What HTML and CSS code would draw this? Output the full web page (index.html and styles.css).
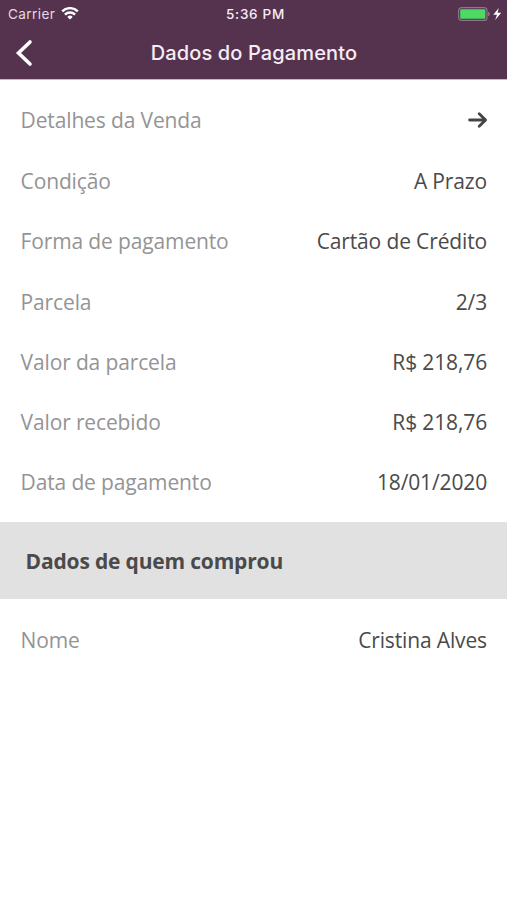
FILE: index.html
```html
<!DOCTYPE html>
<html lang="pt-BR">
<head>
<meta charset="utf-8">
<title>Dados do Pagamento</title>
<link rel="stylesheet" href="styles.css">
</head>
<body>
<header class="top">
  <div class="status">
    <div class="carrier"><span>Carrier</span>
      <svg width="18" height="14" viewBox="0 0 18 14" fill="none" stroke="#fff" stroke-width="2.4"><path d="M1.2 4.4a11 11 0 0 1 15.6 0M3.9 7.6a7.2 7.2 0 0 1 10.2 0"/><path d="M9 12.4L6.3 9.9a3.8 3.8 0 0 1 5.4 0z" fill="#fff" stroke="none"/></svg>
    </div>
    <div class="time">5:36 PM</div>
    <div class="power">
      <svg width="44" height="14" viewBox="0 0 44 14"><rect x=".6" y=".6" width="28.4" height="12.8" rx="3" fill="none" stroke="#8d758a" stroke-width="1.2"/><rect x="2.2" y="2.2" width="25.2" height="9.6" rx="1.2" fill="#4cd964"/><path d="M30 4.8q1.8.5 1.8 2.2T30 9.2z" fill="#8d758a"/><path d="M40.8 1L35.3 7.8H39L37.2 13l6-7.2h-3.7z" fill="#fff"/></svg>
    </div>
  </div>
  <nav class="nav">
    <svg class="back" width="18" height="28" viewBox="0 0 18 28" fill="none" stroke="#fff" stroke-width="3.6" stroke-linecap="round"><path d="M15 3L3.5 14 15 25"/></svg>
    <h1>Dados do Pagamento</h1>
  </nav>
</header>
<main>
  <section class="details">
    <div class="row first"><span class="label">Detalhes da Venda</span>
      <svg width="20" height="18" viewBox="0 0 20 18" fill="none" stroke="#444" stroke-width="2.8" stroke-linecap="round" stroke-linejoin="round"><path d="M1.6 9h15.8M11.2 2.8L17.6 9l-6.4 6.2"/></svg>
    </div>
    <div class="row"><span class="label">Condição</span><span>A Prazo</span></div>
    <div class="row"><span class="label">Forma de pagamento</span><span>Cartão de Crédito</span></div>
    <div class="row"><span class="label">Parcela</span><span>2/3</span></div>
    <div class="row"><span class="label">Valor da parcela</span><span>R$ 218,76</span></div>
    <div class="row"><span class="label">Valor recebido</span><span>R$ 218,76</span></div>
    <div class="row"><span class="label">Data de pagamento</span><span>18/01/2020</span></div>
  </section>
  <h2>Dados de quem comprou</h2>
  <section class="buyer">
    <div class="row"><span class="label">Nome</span><span>Cristina Alves</span></div>
  </section>
</main>
</body>
</html>
```
FILE: styles.css
```css
* { box-sizing: border-box; }
body { margin: 0; background: #fff; color: #4a4a4a; font: 21px/30px "Open Sans", sans-serif; letter-spacing: -.14px; }
.top { height: 80px; background: #55334f; border-bottom: 1px solid #c9b6c6; color: #f6edf5; font-family: Inter, sans-serif; }
.status { display: grid; grid-template-columns: 1fr auto 1fr; align-items: center; height: 27px; padding: 0 5px 0 8px; font-size: 13.6px; line-height: 20px; }
.carrier { display: flex; align-items: center; gap: 6px; color: #e5d9e3; letter-spacing: .4px; }
.time { padding-left: 1px; font-weight: 550; font-size: 13.5px; letter-spacing: .7px; }
.power { display: flex; justify-content: flex-end; }
.nav { display: grid; grid-template-columns: 40px 1fr 40px; align-items: center; height: 51px; }
.back { margin-left: 15px; }
h1 { margin: 0; padding-left: 1px; font-size: 20px; font-weight: 550; letter-spacing: .12px; text-align: center; white-space: nowrap; }
.row { display: flex; justify-content: space-between; align-items: center; height: 60.2px; padding: 0 20px 0 20.6px; white-space: nowrap; }
.row.first { height: 62.4px; padding-right: 19px; }
.details { padding-top: 8.7px; height: 442px; }
.label { color: #949494; }
h2 { margin: 0; height: 77px; padding: 0 25.6px; background: #e1e1e1; font-size: 21px; letter-spacing: -.18px; line-height: 78px; font-weight: 700; }
.buyer { padding-top: 10.6px; }
```
